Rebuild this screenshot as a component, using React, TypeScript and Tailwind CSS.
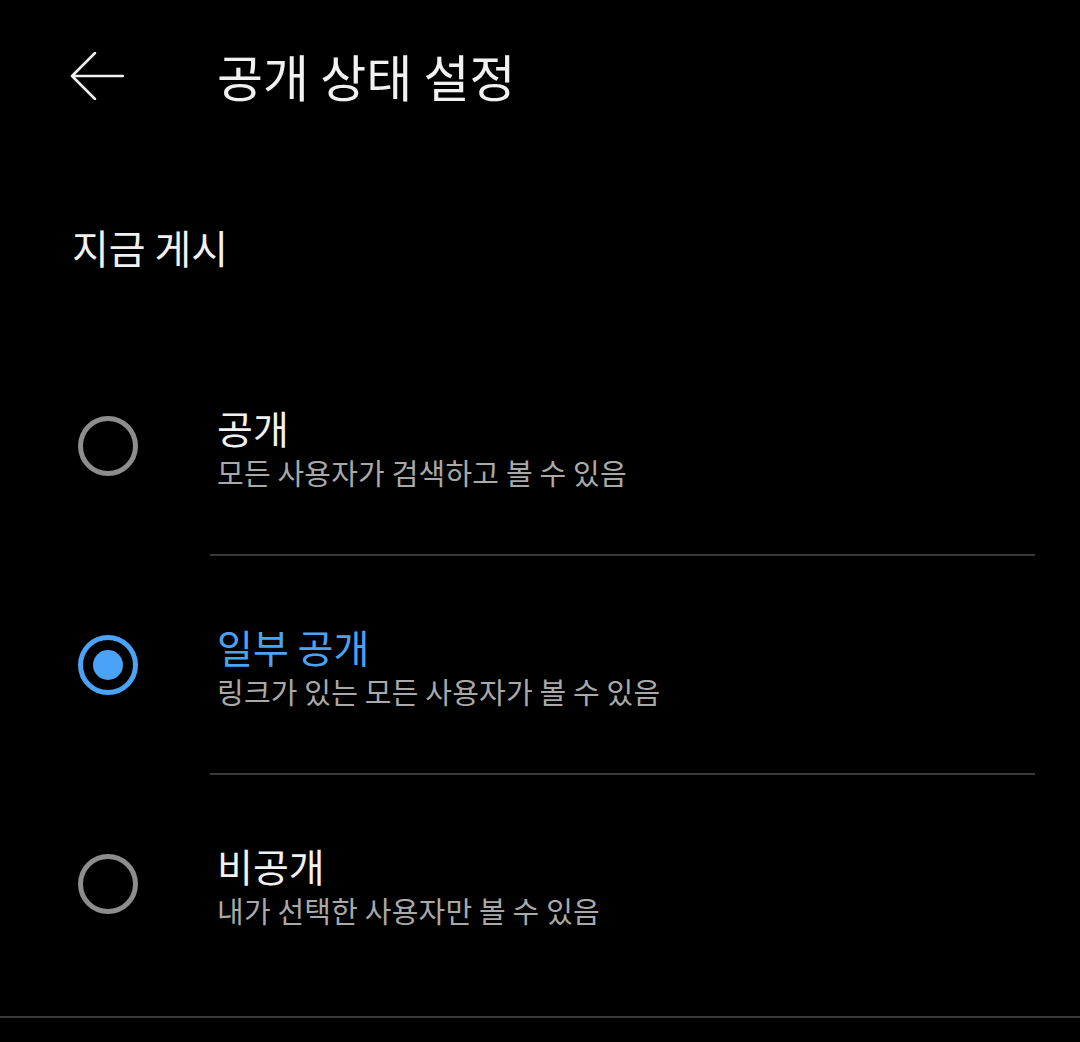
const font = { fontFamily: '"Noto Sans CJK KR", "Noto Sans", sans-serif' };

const options = [
  { title: '공개', desc: '모든 사용자가 검색하고 볼 수 있음', selected: false },
  { title: '일부 공개', desc: '링크가 있는 모든 사용자가 볼 수 있음', selected: true },
  { title: '비공개', desc: '내가 선택한 사용자만 볼 수 있음', selected: false },
];

const Radio = ({ on }: { on: boolean }) =>
  on ? (
    <div className="w-[60px] h-[60px] rounded-full border-[5px] border-[#4aa3f7] flex items-center justify-center">
      <div className="w-[30px] h-[30px] rounded-full bg-[#4aa3f7]" />
    </div>
  ) : (
    <div className="w-[60px] h-[60px] rounded-full border-[5px] border-[#8d8d8d]" />
  );

export default function App() {
  return (
    <div className="w-[1080px] h-[1042px] bg-black text-[#f1f1f1] overflow-hidden" style={font}>
      {/* header */}
      <div className="h-[152px] flex items-center">
        <div className="w-[217px] pl-[70px] flex items-center">
          <svg width="54" height="48" viewBox="0 0 54 48" fill="none">
            <path d="M2 24 H53 M25 1 L2 24 L25 47" stroke="#f1f1f1" strokeWidth="2.5" strokeLinecap="round" strokeLinejoin="round" />
          </svg>
        </div>
        <h1 className="text-[50px] leading-none font-normal -mt-[2px]">공개 상태 설정</h1>
      </div>

      {/* section label */}
      <div className="h-[185px] pl-[72px] pt-[72px]">
        <div className="text-[40px] leading-[46px]">지금 게시</div>
      </div>

      {/* options */}
      {options.map((o, i) => (
        <div key={o.title}>
          <div className="h-[217px] flex items-center">
            <div className="w-[217px] pl-[78px]">
              <Radio on={o.selected} />
            </div>
            <div className="flex flex-col gap-[4px] pt-[3px]">
              <div className={`text-[39px] leading-[46px] ${o.selected ? 'text-[#4aa3f7]' : 'text-[#f1f1f1]'}`}>
                {o.title}
              </div>
              <div className="text-[29px] leading-[36px] tracking-[0.2px] text-[#a9a9a9]">{o.desc}</div>
            </div>
          </div>
          {i < options.length - 1 && <div className="ml-[210px] mr-[45px] h-[2px] bg-[#3a3a3a]" />}
        </div>
      ))}

      <div className="mt-[24px] h-[2px] bg-[#3a3a3a]" />
    </div>
  );
}
